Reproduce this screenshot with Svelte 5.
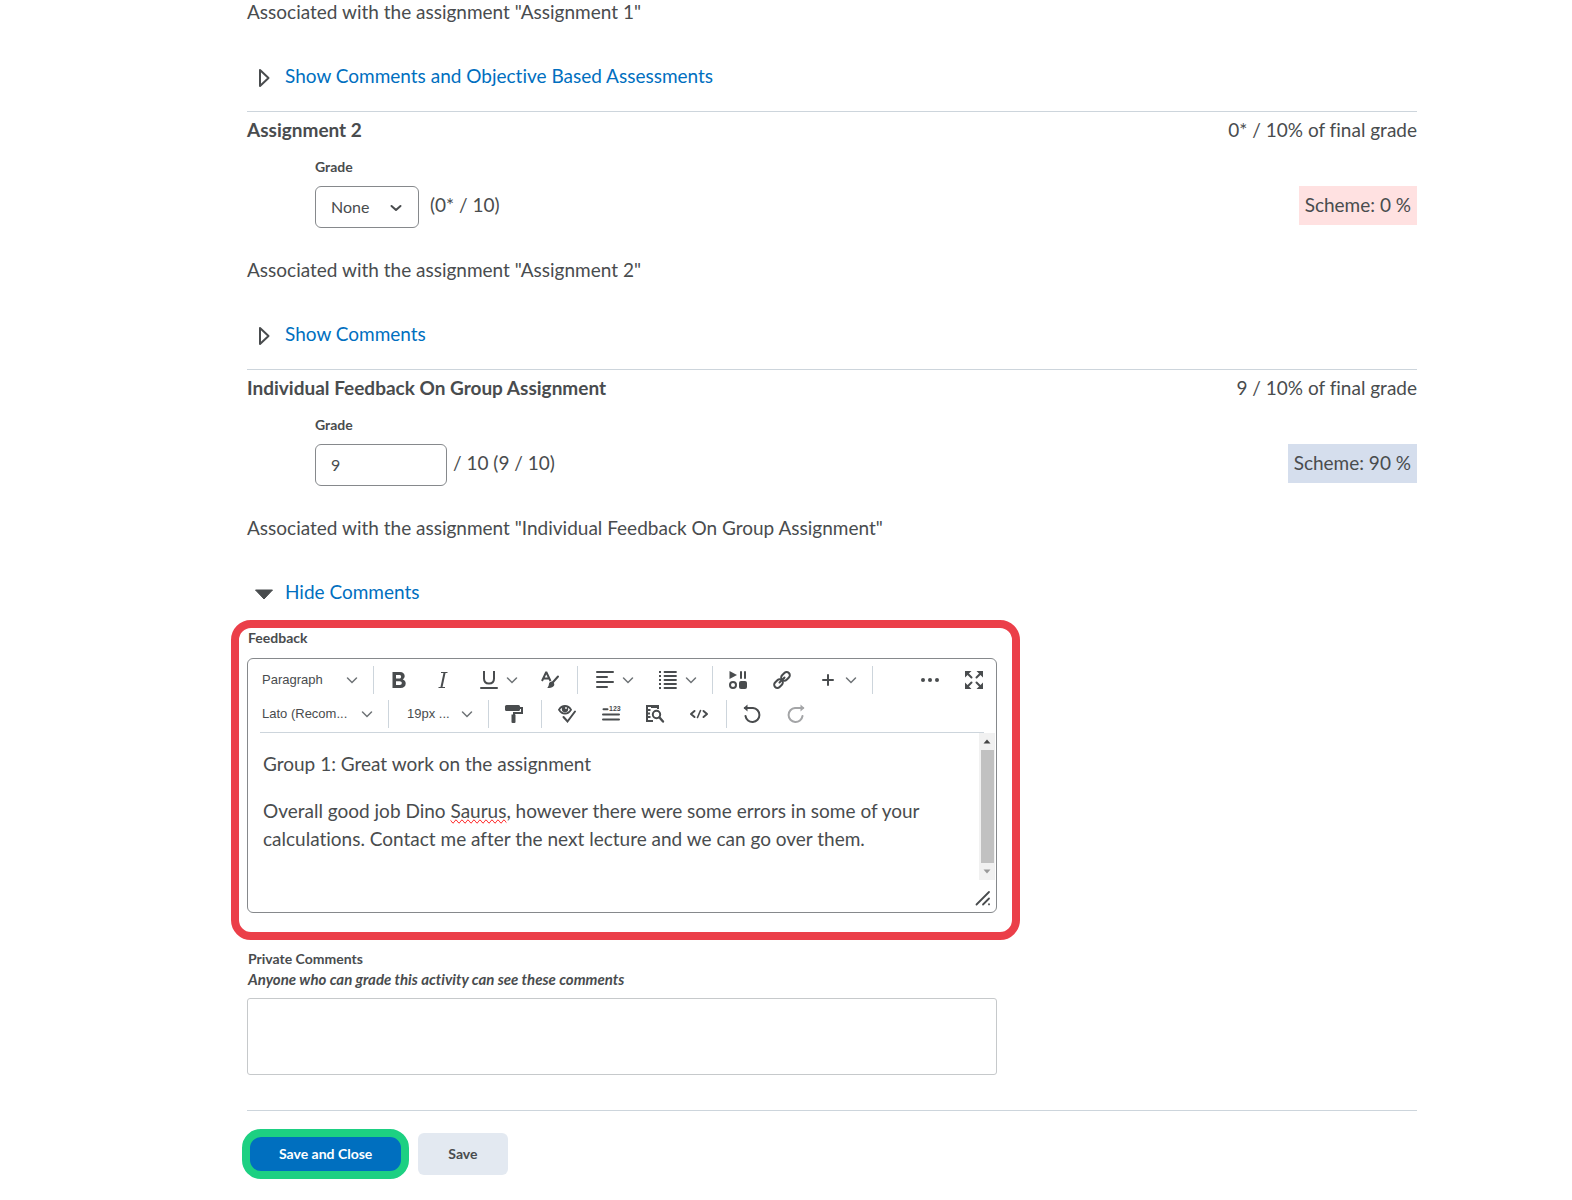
<script>
  let gradeTwo = $state('None');
  let gradeThree = $state('9');
  let blockStyle = $state('Paragraph');
  let fontName = $state('Lato (Recom...');
  let fontSize = $state('19px ...');
  let privateComments = $state('');
</script>

{#snippet chevron()}
  <svg class="chevron" viewBox="0 0 12 12" width="12" height="12" aria-hidden="true">
    <path d="M1.500 4 6 8.500 10.500 4" fill="none" stroke="#6e7376" stroke-width="1.500" stroke-linecap="round" />
  </svg>
{/snippet}

{#snippet closedArrow()}
  <svg class="arrow" viewBox="0 0 20 20" width="20" height="20" aria-hidden="true">
    <path d="M6 2v16L14.500 10z" fill="none" stroke="currentColor" stroke-width="2" stroke-linejoin="round" />
  </svg>
{/snippet}

<main>
  <section class="item first">
    <p>Associated with the assignment "Assignment 1"</p>
    <div class="toggle">
      {@render closedArrow()}
      <a href="#assignment-1">Show Comments and Objective Based Assessments</a>
    </div>
  </section>

  <section class="item">
    <div class="row">
      <h2>Assignment 2</h2>
      <span>0* / 10% of final grade</span>
    </div>
    <label class="small grade-label" for="grade-2">Grade</label>
    <div class="row grade-row">
      <div class="grade">
        <div class="pick boxed">
          <select id="grade-2" bind:value={gradeTwo}>
            <option>None</option>
            <option>Pass</option>
          </select>
          <svg class="chevron" viewBox="0 0 12 12" width="12" height="12" aria-hidden="true">
            <path d="M1.500 5 6 9l4.500-4" fill="none" stroke="currentColor" stroke-width="2" stroke-linecap="round" stroke-linejoin="round" />
          </svg>
        </div>
        <span class="after-select">(0* / 10)</span>
      </div>
      <span class="scheme low">Scheme: 0 %</span>
    </div>
    <p>Associated with the assignment "Assignment 2"</p>
    <div class="toggle">
      {@render closedArrow()}
      <a href="#assignment-2">Show Comments</a>
    </div>
  </section>

  <section class="item">
    <div class="row">
      <h2>Individual Feedback On Group Assignment</h2>
      <span>9 / 10% of final grade</span>
    </div>
    <label class="small grade-label" for="grade-3">Grade</label>
    <div class="row grade-row">
      <div class="grade">
        <input id="grade-3" type="text" bind:value={gradeThree} />
        <span class="after-input">/ 10 (9 / 10)</span>
      </div>
      <span class="scheme high">Scheme: 90 %</span>
    </div>
    <p>Associated with the assignment "Individual Feedback On Group Assignment"</p>
    <div class="toggle">
      <svg class="arrow" viewBox="0 0 20 20" width="20" height="20" aria-hidden="true">
        <path d="M1.500 6h17L10 15z" fill="currentColor" stroke="currentColor" stroke-linejoin="round" />
      </svg>
      <a href="#comments">Hide Comments</a>
    </div>

    <div class="callout">
      <div class="small" id="feedback-label">Feedback</div>
      <div class="editor">
        <div class="bar">
          <div class="group font-group">
            <div class="pick block-pick">
              <select aria-label="Format" bind:value={blockStyle}><option>Paragraph</option></select>
              {@render chevron()}
            </div>
          </div>
          <div class="group">
            <button aria-label="Bold">
              <svg viewBox="0 0 18 18" width="18" height="18"><path fill-rule="evenodd" fill="currentColor" d="M2.500 1H10c3 0 4.700 1.700 4.700 4.100 0 1.600-.8 2.800-2 3.400 1.900.6 3 2 3 4 0 2.800-2 4.500-5.200 4.500h-8zM6 4v3.500h3.300c1.200 0 1.800-.7 1.800-1.800S10.500 4 9.300 4zm0 6.200V14h3.700c1.400 0 2.100-.7 2.100-1.900s-.8-1.900-2.200-1.900z" /></svg>
            </button>
            <button aria-label="Italic">
              <svg viewBox="0 0 18 18" width="18" height="18"><path fill="none" stroke="currentColor" d="M7 1.500h6.500M4.500 16.500H11" /><path fill="none" stroke="currentColor" stroke-width="2" d="M10.600 1.500 7.400 16.500" /></svg>
            </button>
            <button class="split" aria-label="Underline">
              <svg viewBox="0 0 18 18" width="18" height="18"><path fill="none" stroke="currentColor" stroke-width="2" d="M4 0v7.500c0 3.300 1.800 5 5 5s5-1.700 5-5V0" /><path fill="none" stroke="currentColor" stroke-width="2" stroke-linecap="round" d="M1 17h16" /></svg>
              {@render chevron()}
            </button>
            <button aria-label="Text color">
              <svg viewBox="0 0 18 18" width="18" height="18"><path fill="none" stroke="currentColor" stroke-width="2" d="M1 10 5 1.500h.5L9.500 10M2.500 7.500h5.700" /><path fill="none" stroke="currentColor" stroke-width="2" stroke-linecap="round" d="m17 5.500-6.200 7" /><path fill="currentColor" d="M11.500 10.500c-2-.3-3.400.6-3.600 2.500-.1 1.700-.6 2.700-1.700 3.800 3 .6 5.800-.2 6.900-2.300.5-1.200.1-2.600-1.600-4z" /></svg>
            </button>
          </div>
          <div class="group">
            <button class="split" aria-label="Alignment">
              <svg viewBox="0 0 18 18" width="18" height="18"><path fill="none" stroke="currentColor" stroke-width="2" stroke-linecap="round" d="M1 1h16M1 6h10M1 11h16M1 16h10" /></svg>
              {@render chevron()}
            </button>
            <button class="split" aria-label="List">
              <svg viewBox="0 0 18 18" width="18" height="18"><path fill="none" stroke="currentColor" stroke-width="1.800" stroke-linecap="round" d="M5.500 1H17M5.500 5H17M5.500 9H17M5.500 13H17M5.500 17H17" /><path fill="none" stroke="currentColor" stroke-width="2" d="M0 1h2M0 5h2M0 9h2M0 13h2M0 17h2" /></svg>
              {@render chevron()}
            </button>
          </div>
          <div class="group">
            <button aria-label="Insert stuff">
              <svg viewBox="0 0 18 18" width="18" height="18"><path fill="currentColor" d="M.5 0 8 4 .5 8z" /><path fill="none" stroke="currentColor" stroke-width="2" stroke-linecap="round" d="M12 1v6M16 1v6" /><circle cx="4" cy="14" r="3" fill="none" stroke="currentColor" stroke-width="2" /><rect x="10" y="10" width="8" height="8" rx="2" fill="currentColor" /></svg>
            </button>
            <button aria-label="Insert link">
              <svg viewBox="0 0 18 18" width="18" height="18"><g fill="none" stroke="currentColor" stroke-width="2"><rect x="7.700" y="2.200" width="9.600" height="6.400" rx="3.200" transform="rotate(-45 12.500 5.400)" /><rect x=".7" y="9.400" width="9.600" height="6.400" rx="3.200" transform="rotate(-45 5.500 12.600)" /><path stroke-linecap="round" d="m6.500 11.500 5-5" /></g></svg>
            </button>
            <button class="split" aria-label="Other insert options">
              <svg viewBox="0 0 18 18" width="18" height="18"><path fill="none" stroke="currentColor" stroke-width="2" stroke-linecap="round" d="M9 4v10M4 9h10" /></svg>
              {@render chevron()}
            </button>
          </div>
          <div class="group last">
            <button aria-label="More actions">
              <svg viewBox="0 0 18 18" width="18" height="18" fill="currentColor"><circle cx="2" cy="9" r="2" /><circle cx="9" cy="9" r="2" /><circle cx="16" cy="9" r="2" /></svg>
            </button>
            <button aria-label="Fullscreen">
              <svg viewBox="0 0 18 18" width="18" height="18"><path fill="currentColor" d="M0 0h6.500L4.400 2.100 2.100 4.400 0 6.500zM18 0v6.500L11.500 0zM0 18v-6.500L6.500 18zM18 18h-6.500l6.500-6.500z" /><path stroke="currentColor" stroke-width="2" stroke-linecap="round" d="m2.500 2.500 4 4M15.500 2.500l-4 4M2.500 15.500l4-4M15.500 15.500l-4-4" /></svg>
            </button>
          </div>
        </div>
        <div class="bar second">
          <div class="group font-group">
            <div class="pick name-pick">
              <select aria-label="Font family" bind:value={fontName}><option>Lato (Recom...</option></select>
              {@render chevron()}
            </div>
          </div>
          <div class="group size-group">
            <div class="pick size-pick">
              <select aria-label="Font size" bind:value={fontSize}><option>19px ...</option></select>
              {@render chevron()}
            </div>
          </div>
          <div class="group">
            <button aria-label="Format painter">
              <svg viewBox="0 0 18 18" width="18" height="18"><rect y="0" width="15" height="6" rx="1.500" fill="currentColor" /><path fill="none" stroke="currentColor" stroke-width="2" d="M14 3h3v5H9v3" /><path fill="currentColor" d="M6.500 9.500h4V17a1 1 0 0 1-1 1h-2a1 1 0 0 1-1-1z" /></svg>
            </button>
          </div>
          <div class="group">
            <button aria-label="Accessibility checker">
              <svg viewBox="0 0 18 18" width="18" height="18"><path fill="none" stroke="currentColor" stroke-width="1.800" d="M1 4.700C2.500 2.200 4.600 1 7 1s4.500 1.200 6 3.700C11.500 7.300 9.400 8.500 7 8.500S2.500 7.300 1 4.700z" /><circle cx="7" cy="4" r="3.200" fill="currentColor" /><circle cx="8" cy="3" r=".9" fill="#fff" /><path fill="none" stroke="currentColor" stroke-width="2" stroke-linecap="round" d="m5.500 12 4 4.500L17 6.500" /></svg>
            </button>
            <button aria-label="Word count">
              <svg viewBox="0 0 18 18" width="18" height="18"><path fill="none" stroke="currentColor" stroke-width="2" stroke-linecap="round" d="M1 9.500h16M1 14.500h16M1.500 4.200h4" /><text class="digits" x="7" y="6">123</text></svg>
            </button>
            <button aria-label="Preview">
              <svg viewBox="0 0 18 18" width="18" height="18"><path fill="none" stroke="currentColor" stroke-width="2" d="M12 4V1H1v15h6M1 5h3.500M1 8.500h3M1 12h3.500" /><path fill="currentColor" d="M5 0h7v3H5z" /><circle cx="10.500" cy="9.500" r="3.700" fill="none" stroke="currentColor" stroke-width="2" /><path fill="none" stroke="currentColor" stroke-width="2.400" stroke-linecap="round" d="m13.500 12.500 3.500 4" /></svg>
            </button>
            <button aria-label="Source code">
              <svg viewBox="0 0 18 18" width="18" height="18"><path fill="none" stroke="currentColor" stroke-width="2" stroke-linecap="round" stroke-linejoin="round" d="M4.500 6 1 9l3.500 3M13.500 6 17 9l-3.500 3" /><path fill="none" stroke="currentColor" stroke-width="1.600" stroke-linecap="round" d="m10.500 5.500-3 7" /></svg>
            </button>
          </div>
          <div class="group last plain">
            <button aria-label="Undo">
              <svg viewBox="0 0 18 18" width="18" height="18"><path fill="none" stroke="currentColor" stroke-width="2" stroke-linecap="round" d="M2 3h8a7 7 0 1 1-7.500 8" /><path fill="currentColor" d="M.5 3 4.500-.5v7z" /></svg>
            </button>
            <button aria-label="Redo" class="dim">
              <svg viewBox="0 0 18 18" width="18" height="18"><path fill="none" stroke="currentColor" stroke-width="2" stroke-linecap="round" d="M16 3H8a7 7 0 1 0 7.500 8" /><path fill="currentColor" d="M17.500 3 13.500-.5v7z" /></svg>
            </button>
          </div>
        </div>
        <div class="rule"></div>
        <div class="page">
          <div class="text" role="textbox" tabindex="0" aria-multiline="true" aria-labelledby="feedback-label" contenteditable="true" spellcheck="false">
            <p>Group 1: Great work on the assignment</p>
            <p>Overall good job Dino <span class="misspelt">Saurus</span>, however there were some errors in some of your calculations. Contact me after the next lecture and we can go over them.</p>
          </div>
          <div class="scroll" aria-hidden="true">
            <svg viewBox="0 0 16 17" width="16" height="17"><path fill="#444" d="m4.500 10.500 3.500-4 3.500 4z" /></svg>
            <div class="thumb"></div>
            <svg viewBox="0 0 16 17" width="16" height="17"><path fill="#999" d="m4.500 6.500 3.500 4 3.500-4z" /></svg>
          </div>
        </div>
        <div class="foot">
          <svg viewBox="0 0 16 16" width="16" height="16" aria-hidden="true"><path fill="none" stroke="currentColor" stroke-width="1.800" stroke-linecap="round" d="M1.500 14.500 14 2M8 14.500 14 8.500M14 14.200v.2" /></svg>
        </div>
      </div>
    </div>

    <label class="small" for="private">Private Comments</label>
    <div class="small hint" id="private-hint">Anyone who can grade this activity can see these comments</div>
    <textarea id="private" aria-describedby="private-hint" bind:value={privateComments}></textarea>
  </section>

  <footer>
    <button class="action primary">Save and Close</button>
    <button class="action">Save</button>
  </footer>
</main>

<style>
  :global(body) {
    margin: 0;
    background: #fff;
  }
  main {
    box-sizing: border-box;
    padding: 0 155px 20px 247px;
    color: #494c4e;
    font: 400 19px/24px Lato, "Liberation Sans", sans-serif;
    font-variant-ligatures: none;
  }
  p,
  h2 {
    margin: 0;
    font-size: 19px;
  }
  h2 {
    font-weight: 700;
  }
  a {
    color: #006fbf;
    text-decoration: none;
  }
  button,
  input,
  select,
  textarea {
    box-sizing: border-box;
    margin: 0;
    color: inherit;
    font-family: inherit;
  }
  .item {
    padding: 6px 0 23px;
    border-top: 1px solid #cdd5dc;
  }
  .item.first {
    padding-top: 0;
    border-top: 0;
  }
  .item:last-of-type {
    padding-bottom: 35px;
  }
  .row {
    display: flex;
    justify-content: space-between;
  }
  .toggle {
    display: flex;
    gap: 11px;
    margin-top: 40px;
    padding-left: 7px;
  }
  .arrow {
    margin-top: 4px;
  }
  .small {
    display: block;
    padding-left: 1px;
    font-size: 14px;
    font-weight: 700;
    line-height: 20px;
  }
  .grade-label {
    margin: 15px 0 9px 67px;
  }
  .grade-row {
    align-items: flex-start;
    margin: 0 0 30px 68px;
  }
  .grade {
    display: flex;
  }
  .grade > span {
    padding-top: 7px;
  }
  .grade .after-select {
    padding-left: 11px;
  }
  .grade .after-input {
    padding-left: 6px;
  }
  .pick {
    display: grid;
    align-items: center;
  }
  .pick > :global(*) {
    grid-area: 1 / 1;
  }
  .pick .chevron {
    justify-self: end;
    pointer-events: none;
  }
  .chevron {
    flex: none;
  }
  select {
    width: 100%;
    padding: 0;
    border: 0;
    background: transparent;
    appearance: none;
    outline: none;
  }
  .boxed select,
  input {
    height: 42px;
    padding: 0 15px 2px;
    border: 1px solid #86898c;
    border-radius: 6px;
    font-size: 16px;
  }
  .boxed {
    width: 104px;
  }
  .boxed .chevron {
    margin-right: 17px;
  }
  input {
    width: 132px;
  }
  .scheme {
    padding: 7px 6px 8px;
  }
  .low {
    background: #ffe1e1;
  }
  .high {
    background: #d5deed;
  }
  .callout {
    box-sizing: border-box;
    max-width: 789px;
    margin: 16px 0 9px -16px;
    padding: 0 15px 19px 8px;
    border: 8px solid #eb3f49;
    border-radius: 20px;
  }
  .editor {
    margin-top: 10px;
    overflow: hidden;
    border: 1px solid #86898c;
    border-radius: 6px;
  }
  .bar {
    display: flex;
    height: 28px;
    margin-top: 7px;
  }
  .bar.second {
    margin: 6px 0 4px;
  }
  .group {
    display: flex;
    padding: 0 5px 0 3px;
    border-right: 1px solid #cdd5dc;
  }
  .group.last {
    flex: 1;
    justify-content: flex-end;
    padding-right: 0;
    border-right: 0;
  }
  .group.plain {
    justify-content: flex-start;
  }
  .font-group {
    padding: 0 15px 0 14px;
  }
  .size-group {
    padding: 0 15px 0 18px;
  }
  .bar select {
    height: 28px;
    font: 400 13px/28px "Liberation Sans", Arial, sans-serif;
  }
  .block-pick {
    width: 96px;
  }
  .name-pick {
    width: 111px;
  }
  .size-pick {
    width: 66px;
  }
  .bar button {
    display: flex;
    align-items: center;
    justify-content: center;
    width: 44px;
    padding: 0;
    border: 0;
    background: transparent;
  }
  .bar button svg {
    overflow: visible;
  }
  .bar .split {
    justify-content: flex-start;
    gap: 8px;
    width: 63px;
    padding-left: 15px;
  }
  .bar .dim {
    color: #a4a5a7;
  }
  .digits {
    fill: currentColor;
    font: 700 7px "Liberation Sans", Arial, sans-serif;
  }
  .rule {
    height: 1px;
    margin: 0 12px;
    background: #cdd5dc;
  }
  .page {
    display: flex;
    height: 147px;
  }
  .text {
    flex: 1;
    padding: 17px 15px 0;
    line-height: 28px;
    outline: none;
  }
  .text p {
    margin-bottom: 19px;
  }
  .misspelt {
    text-decoration: underline wavy #e22 1px;
    text-decoration: spelling-error;
  }
  .scroll {
    display: flex;
    flex-direction: column;
    width: 16px;
    margin-right: 1px;
    background: #f1f1f1;
  }
  .thumb {
    flex: 1;
    margin: 0 1px 0 2px;
    background: #c1c1c1;
  }
  .foot {
    display: flex;
    justify-content: flex-end;
    padding: 10px 5px 6px;
  }
  textarea {
    display: block;
    width: 100%;
    max-width: 750px;
    height: 77px;
    margin-top: 9px;
    padding: 8px 15px;
    border: 1px solid #c6c9cb;
    border-radius: 3px;
    font-size: 16px;
    resize: none;
  }
  .hint {
    font-size: 15px;
    font-style: italic;
  }
  footer {
    display: flex;
    align-items: center;
    gap: 9px;
    padding-top: 18px;
    border-top: 1px solid #cdd5dc;
  }
  .action {
    height: 42px;
    padding: 0 30px 2px;
    border: 0;
    border-radius: 6px;
    background: #e3e9f1;
    font-size: 14px;
    font-weight: 700;
  }
  .primary {
    height: 50px;
    margin-left: -5px;
    padding: 0 29px 2px;
    border: 8px solid #1dd082;
    border-radius: 19px;
    background: #006fbf;
    color: #fff;
  }
</style>
